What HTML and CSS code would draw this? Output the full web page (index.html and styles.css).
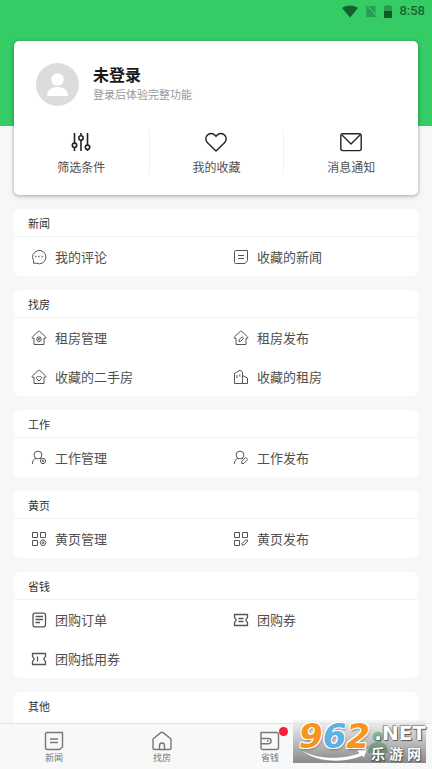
FILE: index.html
```html
<!DOCTYPE html>
<html lang="zh-CN">
<head>
<meta charset="utf-8">
<meta name="viewport" content="width=device-width, initial-scale=1">
<title>我的</title>
<link rel="stylesheet" href="styles.css">
</head>
<body>
<div class="app">
  <main class="scroll">
    <header class="hero">
      <div class="status">
        <svg class="status-wifi" viewBox="0 0 16 13"><path d="M0 3C4-.4 12-.4 16 3L8 12.500z" fill="#14602f"/></svg>
        <svg class="status-sim" viewBox="0 0 12 13"><path d="M4 1h6.500v11H1V4z" fill="#2a9e52"/><path d="M.8 0l11.500 12" stroke="#35cc66" stroke-width="1.500"/><path d="M0 .5l11.500 12" stroke="#1f8443" stroke-width="1"/></svg>
        <svg class="status-battery" viewBox="0 0 8 13"><path d="M2.500 0h3v1H8v5H0V1h2.500z" fill="#279a4e"/><path d="M0 6h8v7H0z" fill="#12582b"/></svg>
        <span>8:58</span>
      </div>
    </header>

    <section class="profile">
      <a class="user" href="#login">
        <svg class="avatar" viewBox="0 0 43 43"><circle cx="21.500" cy="21.500" r="21.500" fill="#dcdcdc"/><circle cx="21.500" cy="16.500" r="6.300" fill="#fff"/><path d="M11 33c0-6 5-9 10.500-9S32 27 32 33z" fill="#fff"/></svg>
        <span class="user-text">
          <strong class="user-name">未登录</strong>
          <span class="user-note">登录后体验完整功能</span>
        </span>
      </a>
      <nav class="actions">
        <a class="action" href="#filter">
          <svg class="icon-lg" viewBox="0 0 24 22"><path d="M5.500 2v10M5.500 16.500V20M12 2v2.500M12 9v11M18.500 2v12M18.500 18.500V20"/><circle cx="5.500" cy="14.300" r="2.200"/><circle cx="12" cy="7" r="2.200"/><circle cx="18.500" cy="16.300" r="2.200"/></svg>
          <span>筛选条件</span>
        </a>
        <a class="action" href="#favorites">
          <svg class="icon-lg thin" viewBox="0 0 24 22"><path d="M12 20L3.500 11.800C1.500 9.800 1.300 6.500 3 4.500C5.300 1.800 9 2 11 4.300L12 5.400L13 4.300C15 2 18.700 1.800 21 4.500C22.700 6.500 22.500 9.800 20.500 11.800z"/></svg>
          <span>我的收藏</span>
        </a>
        <a class="action" href="#messages">
          <svg class="icon-lg thin" viewBox="0 0 24 22"><rect x="1.800" y="2.800" width="20.400" height="16.800" rx="2"/><path d="M3 4l9 9 9-9"/></svg>
          <span>消息通知</span>
        </a>
      </nav>
    </section>

    <div class="groups">
      <section class="group">
        <h2>新闻</h2>
        <div class="items">
          <a class="item" href="#comments"><svg class="icon" viewBox="0 0 16 16"><path d="M2.500 14.200V11.500A6.700 6.700 0 1 1 5.500 14.200z"/><path class="dots" d="M4.300 7.500h1.200M7.400 7.500h1.200M10.500 7.500h1.200"/></svg><span>我的评论</span></a>
          <a class="item" href="#saved-news"><svg class="icon" viewBox="0 0 16 16"><path d="M2.500 1.500h12v10l-2.500 3H2.500q-1 0-1-1v-11q0-1 1-1zM5 6.500h6M5 9.500h6"/></svg><span>收藏的新闻</span></a>
        </div>
      </section>

      <section class="group">
        <h2>找房</h2>
        <div class="items">
          <a class="item" href="#rent-manage"><svg class="icon" viewBox="0 0 16 16"><path d="M3 8.200H1.300Q.8 7.400 1.600 6.700L7.200 1.500Q8 .9 8.800 1.500L14.400 6.700Q15.200 7.400 14.700 8.200H13V14.500H3z"/><path d="M6.800 7h2.400l1.300 2.200-1.300 2.200H6.800L5.500 9.200z"/><circle cx="8" cy="9.200" r=".8"/></svg><span>租房管理</span></a>
          <a class="item" href="#rent-post"><svg class="icon" viewBox="0 0 16 16"><path d="M3 8.200H1.300Q.8 7.400 1.600 6.700L7.200 1.500Q8 .9 8.800 1.500L14.400 6.700Q15.200 7.400 14.700 8.200H13V14.500H3z"/><path d="M6 11.500V9.800L9 6.800l1.700 1.500-3 3z"/></svg><span>租房发布</span></a>
          <a class="item" href="#saved-homes"><svg class="icon" viewBox="0 0 16 16"><path d="M3 8.200H1.300Q.8 7.400 1.600 6.700L7.200 1.500Q8 .9 8.800 1.500L14.400 6.700Q15.200 7.400 14.700 8.200H13V14.500H3z"/><path d="M8 12L5.800 9.800C4.500 8 6.800 6.500 8 8.200C9.200 6.500 11.500 8 10.200 9.800z"/></svg><span>收藏的二手房</span></a>
          <a class="item" href="#saved-rents"><svg class="icon" viewBox="0 0 16 16"><path d="M1.500 14.500v-10L7 1.200l2.500 1.800v11.500zM9.500 6.500l5 2.500v5.500h-5M4 6v3M6.800 5.500v2"/></svg><span>收藏的租房</span></a>
        </div>
      </section>

      <section class="group">
        <h2>工作</h2>
        <div class="items">
          <a class="item" href="#job-manage"><svg class="icon" viewBox="0 0 16 16"><circle cx="7" cy="5" r="3.900"/><path d="M1.300 14C1.500 11 2.800 9 5 8.300M9 8.300l1 .6M10.700 8.500h2.600l1.500 2.500-1.500 2.500h-2.600L9.200 11z"/><circle cx="12" cy="11" r=".8"/></svg><span>工作管理</span></a>
          <a class="item" href="#job-post"><svg class="icon" viewBox="0 0 16 16"><circle cx="7" cy="5" r="3.900"/><path d="M1.300 14C1.500 11 2.800 9 5 8.300M9 8l1 .7M8.700 13.500v-2l3.800-4 2.300 2-4 4z"/></svg><span>工作发布</span></a>
        </div>
      </section>

      <section class="group">
        <h2>黄页</h2>
        <div class="items">
          <a class="item" href="#pages-manage"><svg class="icon" viewBox="0 0 16 16"><path d="M1.500 1.500h5v5h-5zM9.500 1.500h5v5h-5zM1.500 9.500h5v5h-5zM10.600 9h2.800l1.500 2.700-1.500 2.700h-2.800l-1.500-2.700z"/><circle cx="12" cy="11.700" r=".9"/></svg><span>黄页管理</span></a>
          <a class="item" href="#pages-post"><svg class="icon" viewBox="0 0 16 16"><path d="M1.500 1.500h5v5h-5zM9.500 1.500h5v5h-5zM1.500 9.500h5v5h-5zM9 14v-1.500l3.500-3.500h2v1.500L11 14z"/></svg><span>黄页发布</span></a>
        </div>
      </section>

      <section class="group">
        <h2>省钱</h2>
        <div class="items">
          <a class="item" href="#orders"><svg class="icon bold" viewBox="0 0 16 16"><rect x="2" y="1.200" width="12.500" height="13.600" rx="2"/><path d="M4.500 4.500H12M4.500 7.500H12M4.500 10.500H9"/></svg><span>团购订单</span></a>
          <a class="item" href="#coupons"><svg class="icon bold" viewBox="0 0 16 16"><path d="M1.500 2.500h13v2.800L12.700 8l1.800 2.700v2.800h-13v-2.800L3.300 8 1.500 5.300zM5.500 6.500h5M5.500 9.500h5"/></svg><span>团购券</span></a>
          <a class="item" href="#vouchers"><svg class="icon bold" viewBox="0 0 16 16"><path d="M1.500 2.500h13v2.800L12.700 8l1.800 2.700v2.800h-13v-2.800L3.300 8 1.500 5.300zM6.500 5.500v5"/></svg><span>团购抵用券</span></a>
        </div>
      </section>

      <section class="group">
        <h2>其他</h2>
        <div class="items"></div>
      </section>
    </div>
  </main>

  <nav class="tabs">
    <a class="tab" href="#news"><svg class="icon-tab" viewBox="0 0 20 20"><path d="M3 1.500h15.500v14.500l-3 2.500H3q-1.500 0-1.500-1.500V3q0-1.500 1.500-1.500zM6 8h8M6 11.500h8"/></svg><span>新闻</span></a>
    <a class="tab" href="#homes"><svg class="icon-tab" viewBox="0 0 20 20"><path d="M2.500 18.500q-1.500 0-1.500-1.500V8L8.800 1.600Q10 .8 11.200 1.600L19 8v9q0 1.500-1.500 1.500zM7.500 18v-3.500a2.500 2.500 0 0 1 5 0V18"/></svg><span>找房</span></a>
    <a class="tab" href="#save"><span class="tab-mark"><svg class="icon-tab" viewBox="0 0 20 20"><path d="M1 1.500h15.500q2 0 2 2v13q0 2-2 2H3q-2 0-2-2zM1 7.500h7.500a2.600 2.600 0 0 1 0 5.200H1M7 10h1.500"/></svg><i class="dot"></i></span><span>省钱</span></a>
    <a class="tab" href="#me"><svg class="icon-me" viewBox="0 0 20 32"><circle cx="10" cy="6" r="5.500"/><path d="M0 22q0-11 10-11t10 11zM3 25h14v6H3z"/></svg></a>
  </nav>

  <div class="brand">
    <svg class="brand-swoosh" viewBox="0 0 70 16"><path d="M1 2C18 13 45 12 60 6L57 3 69 1 65 11 63 9C44 17 15 16 1 2z" fill="#fff" stroke="#777" stroke-width=".5"/></svg>
    <span class="brand-num">9<b>6</b>2</span>
    <span class="brand-words">
      <span class="brand-net">.NET</span>
      <span class="brand-cn"><span>乐</span><span>游</span><span>网</span></span>
    </span>
  </div>
</div>
</body>
</html>
```
FILE: styles.css
```css
* {
  box-sizing: border-box;
}

body {
  margin: 0;
  background: #f7f7f7;
  color: #505050;
  font-family: "Noto Sans CJK SC", sans-serif;
}

a {
  color: inherit;
  text-decoration: none;
}

svg {
  display: block;
  flex: none;
}

.app {
  position: relative;
  display: flex;
  flex-direction: column;
  height: 100vh;
}

.scroll {
  flex: 1;
  min-height: 0;
  overflow-y: auto;
  scrollbar-width: none;
}

.hero {
  height: 126px;
  background: #35cc66;
}

.status {
  display: flex;
  align-items: center;
  justify-content: flex-end;
  gap: 7px;
  height: 22px;
  padding-right: 7px;
  color: #17652f;
  font: 500 13px/22px Roboto, sans-serif;
}

.status-wifi {
  width: 16px;
  height: 13px;
}

.status-sim {
  width: 12px;
  height: 13px;
}

.status-battery {
  width: 8px;
  height: 13px;
}

.profile {
  position: relative;
  margin: -85px 14px 0;
  padding: 22px 0 21px;
  border-radius: 5px;
  background: #fff;
  box-shadow: 0 1px 4px rgba(0, 0, 0, 0.35);
}

.user {
  display: flex;
  gap: 14px;
  padding: 0 22px;
}

.avatar {
  width: 43px;
  height: 43px;
}

.user-text {
  display: flex;
  flex-direction: column;
}

.user-name {
  color: #1a1a1a;
  font-size: 16px;
  line-height: 22px;
}

.user-note {
  color: #999;
  font-size: 11px;
  line-height: 18px;
}

.actions {
  display: grid;
  grid-template-columns: repeat(3, 1fr);
  margin-top: 24px;
}

.action {
  display: flex;
  flex-direction: column;
  align-items: center;
  justify-content: flex-end;
  gap: 7px;
  height: 44px;
  font-size: 12px;
  line-height: 14px;
}

.action + .action {
  border-left: 1px solid #f0f0f0;
}

.icon-lg {
  width: 24px;
  height: 22px;
  fill: none;
  stroke: #222;
  stroke-width: 1.6;
}

.thin {
  stroke-width: 1.4;
  stroke-linejoin: round;
}

.groups {
  display: flex;
  flex-direction: column;
  gap: 14px;
  padding: 14px;
}

.group {
  border-radius: 5px;
  background: #fff;
}

.group h2 {
  height: 28px;
  margin: 0;
  padding: 0 14px;
  border-bottom: 1px solid #f2f2f2;
  color: #333;
  font-size: 11px;
  font-weight: 400;
  line-height: 28px;
}

.group:last-child h2 {
  border-bottom: 0;
}

.items {
  display: grid;
  grid-template-columns: 1fr 1fr;
  min-height: 39px;
}

.item {
  display: flex;
  align-items: center;
  gap: 8px;
  height: 39px;
  padding-left: 17px;
  font-size: 13px;
}

.icon {
  width: 16px;
  height: 16px;
  fill: none;
  stroke: #555;
  stroke-width: 1;
  stroke-linejoin: round;
}

.bold {
  stroke-width: 1.3;
}

.dots {
  stroke-width: 1.3;
}

.tabs {
  display: grid;
  grid-template-columns: repeat(4, 1fr);
  height: 46px;
  border-top: 1px solid #e4e4e4;
  background: #f8f8f8;
}

.tab {
  display: flex;
  flex-direction: column;
  align-items: center;
  padding-top: 7px;
  color: #777;
  font-size: 9px;
  line-height: 14px;
}

.icon-tab {
  width: 20px;
  height: 20px;
  fill: none;
  stroke: #777;
  stroke-width: 1.4;
  stroke-linejoin: round;
}

.icon-me {
  width: 20px;
  height: 32px;
  fill: #1fa050;
}

.tab-mark {
  position: relative;
}

.dot {
  position: absolute;
  top: -4px;
  right: -8px;
  width: 9px;
  height: 9px;
  border-radius: 50%;
  background: #fb1c35;
}

.brand {
  position: absolute;
  right: 6px;
  bottom: 6px;
  width: 133px;
  height: 43px;
  background: linear-gradient(rgba(240, 240, 240, 0.6), rgba(110, 110, 110, 0.8));
  color: #fff;
}

.brand-num {
  position: absolute;
  top: 0;
  left: 6px;
  color: #f79420;
  font: italic bold 34px/32px "DejaVu Sans", sans-serif;
  text-shadow: 1px 1px #fff, -1px -1px #fff, 1px -1px #fff, -1px 1px #fff, 1px 2px 2px #777;
}

.brand-num b {
  color: #5eb0e5;
}

.brand-words {
  position: absolute;
  top: 3px;
  right: 0;
  display: flex;
  flex-direction: column;
  align-items: flex-end;
}

.brand-net {
  font: bold 20px/20px "DejaVu Sans", sans-serif;
  text-shadow: 0 0 1px #444, 1px 1px 1px #555, -1px -1px 1px #999;
}

.brand-cn {
  display: flex;
  gap: 4px;
  padding-right: 5px;
  font-size: 14px;
  font-weight: 700;
  line-height: 20px;
  text-shadow: 0 0 1px #444, 1px 1px 1px #555;
}

.brand-swoosh {
  position: absolute;
  bottom: 0;
  left: 6px;
  width: 70px;
  height: 16px;
}
```
